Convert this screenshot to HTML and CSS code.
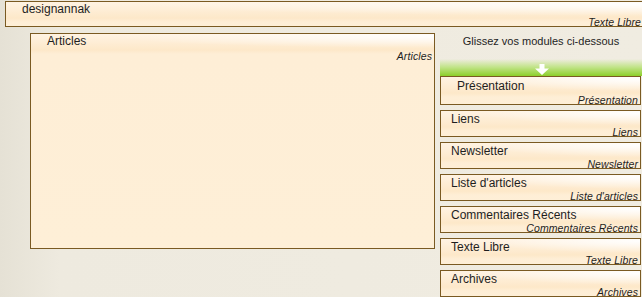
FILE: index.html
```html
<!DOCTYPE html>
<html>
	<head>
		<meta charset="utf-8">
		<title>Modules</title>
		<link rel="stylesheet" href="styles.css">
	</head>
	<body>
		<div class="page">
			<div class="box header">
				<span class="title">designannak</span>
				<span class="label">Texte Libre</span>
			</div>
			<div class="main">
				<div class="box articles">
					<span class="title">Articles</span>
					<span class="label">Articles</span>
				</div>
				<div class="side">
					<p class="hint">Glissez vos modules ci-dessous</p>
					<div class="drop">
						<svg width="14" height="11" viewBox="0 0 14 11"><path d="M4.5 0h5v4.5h4.5l-7 6.5-7-6.5h4.5z" fill="#fff"/></svg>
					</div>
					<div class="box module first">
						<span class="title">Présentation</span>
						<span class="label">Présentation</span>
					</div>
					<div class="box module">
						<span class="title">Liens</span>
						<span class="label">Liens</span>
					</div>
					<div class="box module">
						<span class="title">Newsletter</span>
						<span class="label">Newsletter</span>
					</div>
					<div class="box module">
						<span class="title">Liste d'articles</span>
						<span class="label">Liste d'articles</span>
					</div>
					<div class="box module">
						<span class="title">Commentaires Récents</span>
						<span class="label">Commentaires Récents</span>
					</div>
					<div class="box module">
						<span class="title">Texte Libre</span>
						<span class="label">Texte Libre</span>
					</div>
					<div class="box module">
						<span class="title">Archives</span>
						<span class="label">Archives</span>
					</div>
				</div>
			</div>
		</div>
	</body>
</html>
```
FILE: styles.css
```css
*{
	margin: 0;
	padding: 0;
	box-sizing: border-box;
}
body{
	font-family: "Liberation Sans", Arial, sans-serif;
	font-size: 12px;
	color: #1e1e1e;
	background: linear-gradient(to right, #e5e1d5 0, #eeeadf 60px, #f0ece1 100%);
	overflow: hidden;
	width: 642px;
	height: 297px;
}
.page{
	padding: 1px 0 0 5px;
}
.box{
	position: relative;
	border: 1px solid #7a5a22;
	background:
		radial-gradient(ellipse 80% 12px at 100% 2px, rgba(255,255,255,0.95), rgba(255,255,255,0) 100%),
		linear-gradient(to bottom, #fff3e3 0, #fde8c9 16px, #feeed6 20px, #feefd7 100%);
	display: flex;
	flex-direction: column;
}
.title{
	padding-left: 16px;
	line-height: 15px;
}
.label{
	position: absolute;
	right: 2px;
	bottom: -2px;
	font-style: italic;
	font-size: 10.5px;
	line-height: 12px;
	letter-spacing: 0.1px;
}
.header{
	width: 650px;
	height: 26px;
}
.header .label{
	right: 13px;
}
.main{
	display: flex;
	gap: 5px;
	padding-left: 25px;
	margin-top: 6px;
}
.articles{
	width: 405px;
	height: 216px;
}
.articles .label{
	top: 16px;
	bottom: auto;
}
.side{
	width: 202px;
	margin-top: -6px;
}
.hint{
	text-align: center;
	height: 32px;
	padding-top: 8px;
	font-size: 11px;
}
.drop{
	height: 17px;
	display: flex;
	align-items: flex-end;
	justify-content: center;
	padding-bottom: 1px;
	background: linear-gradient(to bottom, rgba(255,255,255,0) 0, #c2e48a 8px, #8ccf2a 17px);
	margin-right: -2px;
}
.module{
	height: 27px;
	margin-bottom: 5px;
	width: 201px;
}
.module.first{
	height: 29px;
}
.module.first .title{
	padding-left: 16px;
	line-height: 19px;
}
.module .title{
	padding-left: 10px;
	line-height: 16px;
}
```
